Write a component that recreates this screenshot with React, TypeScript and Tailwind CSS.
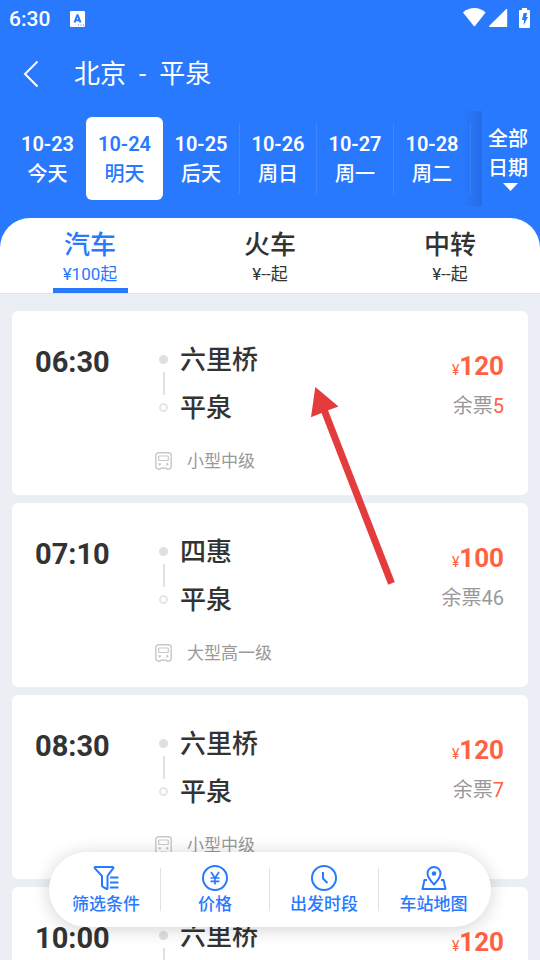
import type { ReactNode } from "react";

type DateOption = { date: string; label: string };
type Mode = { name: string; price: string };
type Trip = { time: string; from: string; to: string; vehicle: string; price: number; left: number };

const dates: DateOption[] = [
  { date: "10-23", label: "今天" },
  { date: "10-24", label: "明天" },
  { date: "10-25", label: "后天" },
  { date: "10-26", label: "周日" },
  { date: "10-27", label: "周一" },
  { date: "10-28", label: "周二" },
];
const selectedDate = 1;

const modes: Mode[] = [
  { name: "汽车", price: "¥100起" },
  { name: "火车", price: "¥--起" },
  { name: "中转", price: "¥--起" },
];

const trips: Trip[] = [
  { time: "06:30", from: "六里桥", to: "平泉", vehicle: "小型中级", price: 120, left: 5 },
  { time: "07:10", from: "四惠", to: "平泉", vehicle: "大型高一级", price: 100, left: 46 },
  { time: "08:30", from: "六里桥", to: "平泉", vehicle: "小型中级", price: 120, left: 7 },
  { time: "10:00", from: "六里桥", to: "平泉", vehicle: "小型中级", price: 120, left: 9 },
];

function StatusBar() {
  return (
    <div className="flex h-[37px] items-center justify-between pl-[9px] pr-2.5">
      <div className="flex items-center gap-5">
        <span className="text-[21px] leading-7 font-medium">6:30</span>
        <svg width="15" height="16" viewBox="0 0 15 16" aria-hidden="true">
          <rect width="15" height="16" rx="1" fill="#fff" />
          <path d="M4.500 11.500 7.300 4.200h.4l2.800 7.300M5.600 9.200h3.800" fill="none" stroke="#2979ff" strokeWidth="2" />
          <path d="M8 14h1M10.500 14h1M13 14h1" stroke="#2979ff" strokeWidth="1" />
        </svg>
      </div>
      <div className="flex items-center pb-0.5">
        <svg width="23" height="19" viewBox="0 0 23 19" fill="#fff" aria-hidden="true">
          <path d="M0 4.500C3 1.500 7 0 11.300 0S19.500 1.500 22.600 4.500L11.800 18.300h-.8z" />
        </svg>
        <svg className="ml-[3px]" width="19" height="18" viewBox="0 0 19 18" fill="#fff" aria-hidden="true">
          <path d="M18.200 .3V18H.8c-.8 0-1-.8-.5-1.300L17 .2c.5-.5 1.200-.4 1.200 .1z" />
        </svg>
        <svg className="ml-[11px]" width="11" height="20" viewBox="0 0 11 20" aria-hidden="true">
          <path d="M3 0h5v2h2q1 0 1 1v16q0 1-1 1H1q-1 0-1-1V3q0-1 1-1h2z" fill="#fff" />
          <path d="M4.600 5h3.600L7 9h2L4.600 17.300 5 12H3z" fill="#2979ff" />
        </svg>
      </div>
    </div>
  );
}

function TitleBar() {
  return (
    <div className="flex h-[74px] items-center">
      <button type="button" aria-label="返回" className="flex w-[74px] pl-[23px]">
        <svg width="16" height="28" viewBox="0 0 16 28" fill="none" stroke="#fff" strokeWidth="2" aria-hidden="true">
          <path d="M14.500 1.500 2 14l12.500 12.500" />
        </svg>
      </button>
      <h1 className="flex gap-[13px] text-[26px] leading-8 font-normal">
        <span>北京</span>
        <span>-</span>
        <span>平泉</span>
      </h1>
    </div>
  );
}

function DateStrip() {
  return (
    <div className="flex h-[95px]">
      <div className="relative flex flex-1 items-center overflow-hidden pl-[9px]">
        {dates.map((d, i) => (
          <button
            key={d.date}
            type="button"
            className={
              i === selectedDate
                ? "flex h-[83px] w-[77px] shrink-0 items-center justify-center rounded-md bg-white text-[#2979ff]"
                : "flex h-[83px] w-[77px] shrink-0 items-center justify-center"
            }
          >
            <span
              className={
                i > selectedDate
                  ? "flex h-[71px] w-full flex-col justify-center border-r border-white/10 pt-px text-xl leading-[30px]"
                  : "flex h-[71px] w-full flex-col justify-center pt-px text-xl leading-[30px]"
              }
            >
              <span className="font-semibold">{d.date}</span>
              <span className="font-medium">{d.label}</span>
            </span>
          </button>
        ))}
        <div className="absolute inset-y-0 right-0 w-5 bg-linear-to-r from-transparent to-black/10" />
      </div>
      <button type="button" className="flex w-[58px] flex-col items-center pt-3.5 pr-1.5 text-xl leading-[29px] font-medium">
        <span>全部</span>
        <span>日期</span>
        <svg className="ml-1" width="15" height="8" viewBox="0 0 15 8" fill="#fff" aria-hidden="true">
          <path d="M0 0h15L7.500 8z" />
        </svg>
      </button>
    </div>
  );
}

function ModeTabs() {
  return (
    <div className="bg-[#2979ff]">
      <div className="grid h-19 grid-cols-3 rounded-t-[30px] border-b border-[#dfe3e8] bg-white">
        {modes.map((m, i) => (
          <button
            key={m.name}
            type="button"
            className={
              i === 0
                ? "flex flex-col items-center justify-end text-[#2979ff]"
                : "flex flex-col items-center justify-end text-[#333]"
            }
          >
            <span className="text-[26px] leading-8 font-medium">{m.name}</span>
            <span className="text-[17px] leading-[27px]">{m.price}</span>
            <span className={i === 0 ? "h-[5px] w-[75px] bg-[#2979ff]" : "h-[5px] w-[75px]"} />
          </button>
        ))}
      </div>
    </div>
  );
}

function BusIcon() {
  return (
    <svg width="17" height="18" viewBox="0 0 17 18" fill="none" stroke="#c8c8c8" strokeWidth="1.400" aria-hidden="true">
      <path d="M3.700 .8h9.600q2.900 0 2.900 2.900v11.300q0 1.500-1.500 1.500l-1 .7h-1.500l-.8-1H5.600l-.8 1H3.300l-1-.7Q.8 16.500 .8 15V3.700Q.8 .8 3.700 .8z" />
      <rect x="3.700" y="4" width="9.600" height="4.500" rx=".6" strokeWidth="1.200" />
      <circle cx="4.800" cy="12.300" r="1.200" fill="#c8c8c8" stroke="none" />
      <circle cx="12.200" cy="12.300" r="1.200" fill="#c8c8c8" stroke="none" />
    </svg>
  );
}

function TripCard({ trip }: { trip: Trip }) {
  return (
    <li className="flex h-46 shrink-0 rounded-md bg-white pt-[25px] pr-6 pl-[23px]">
      <time className="w-[120px] pt-1.5 text-[29px] leading-10 font-bold text-[#333]">{trip.time}</time>
      <div className="flex flex-1 flex-col gap-3.5">
        <div className="flex gap-2">
          <div className="flex w-[17px] flex-col items-center pt-[19px]">
            <span className="size-[9px] rounded-full bg-[#e0e0e0]" />
            <span className="my-2 h-[23px] w-0.5 bg-[#dde2e7]" />
            <span className="size-[9px] rounded-full border-2 border-[#e5e5e5]" />
          </div>
          <div className="text-[26px] leading-[48px] font-medium text-[#333]">
            <p>{trip.from}</p>
            <p>{trip.to}</p>
          </div>
        </div>
        <div className="flex items-center gap-[15px] text-[17px] leading-[30px] text-[#999]">
          <BusIcon />
          <span>{trip.vehicle}</span>
        </div>
      </div>
      <div className="flex flex-col items-end pt-2.5">
        <p className="text-[26px] leading-10 font-bold text-[#ff6142]">
          <span className="text-sm font-normal">¥</span>
          {trip.price}
        </p>
        <p className="text-xl leading-10 text-[#999]">
          余票<span className={trip.left < 10 ? "text-[#ff6142]" : ""}>{trip.left}</span>
        </p>
      </div>
    </li>
  );
}

function ToolIcon({ children }: { children: ReactNode }) {
  return (
    <svg
      className="shrink-0"
      width="28"
      height="28"
      viewBox="0 0 28 28"
      fill="none"
      stroke="#2979ff"
      strokeWidth="2"
      strokeLinejoin="round"
      aria-hidden="true"
    >
      {children}
    </svg>
  );
}

const tools: { label: string; icon: ReactNode }[] = [
  {
    label: "筛选条件",
    icon: (
      <ToolIcon>
        <path d="M3.500 3h17q1.500 0 .6 1.400L15.500 12v12q0 1.400-1.200.8l-3.600-2.200q-.7-.4-.7-1.200V12L2.900 4.400Q2 3 3.500 3z" />
        <path d="M18 13.500h8.500M18 18.500h8.500M18 23.500h8.500" />
      </ToolIcon>
    ),
  },
  {
    label: "价格",
    icon: (
      <ToolIcon>
        <circle cx="14" cy="14" r="12" />
        <path d="m10 8 4 6 4-6M14 14v6.500M9.500 14h9M9.500 17.300h9" strokeWidth="1.700" />
      </ToolIcon>
    ),
  },
  {
    label: "出发时段",
    icon: (
      <ToolIcon>
        <circle cx="14" cy="14" r="12" />
        <path d="M13 8v6.500l4.500 4.500" />
      </ToolIcon>
    ),
  },
  {
    label: "车站地图",
    icon: (
      <ToolIcon>
        <path d="M14 20.500c-3.500-3.800-6.500-7.500-6.500-11a6.500 6.500 0 0 1 13 0c0 3.500-3 7.200-6.500 11z" />
        <circle cx="14" cy="9.500" r="2.300" fill="#2979ff" stroke="none" />
        <path d="M7 16H4.500L2.500 25h23l-2-9H21" />
      </ToolIcon>
    ),
  },
];

function Toolbar() {
  return (
    <nav className="absolute inset-x-[49px] bottom-[33px] grid h-[75px] grid-cols-4 rounded-full bg-white px-[3px] shadow-[0_2px_18px_rgba(0,0,0,0.18)]">
      {tools.map((t, i) => (
        <button key={t.label} type="button" className="flex items-center text-[#2979ff]">
          <span
            className={
              i < tools.length - 1
                ? "flex h-[43px] flex-1 flex-col items-center justify-center border-r border-[#dfe2e8]"
                : "flex h-[43px] flex-1 flex-col items-center justify-center"
            }
          >
            {t.icon}
            <span className="text-[17px] leading-6 font-medium">{t.label}</span>
          </span>
        </button>
      ))}
    </nav>
  );
}

function Pointer() {
  return (
    <svg
      className="pointer-events-none absolute top-[387px] left-[310px]"
      width="86"
      height="198"
      viewBox="0 0 86 198"
      fill="#e43c3c"
      aria-hidden="true"
    >
      <path d="M5.300 0 28.500 19.500 18 23.300 84.800 195 78.200 197.700 11.500 26 1 30.200z" />
    </svg>
  );
}

export default function App() {
  return (
    <div className="relative flex h-screen flex-col overflow-hidden bg-[#ebeff5] font-[Roboto,'Noto_Sans_CJK_SC',sans-serif]">
      <header className="shrink-0 bg-[#2979ff] pb-3 text-white">
        <StatusBar />
        <TitleBar />
        <DateStrip />
      </header>
      <ModeTabs />
      <ul className="flex min-h-0 flex-1 flex-col gap-2 overflow-y-auto px-3 pt-[17px] [scrollbar-width:none]">
        {trips.map((t) => (
          <TripCard key={t.time} trip={t} />
        ))}
      </ul>
      <Pointer />
      <Toolbar />
    </div>
  );
}
